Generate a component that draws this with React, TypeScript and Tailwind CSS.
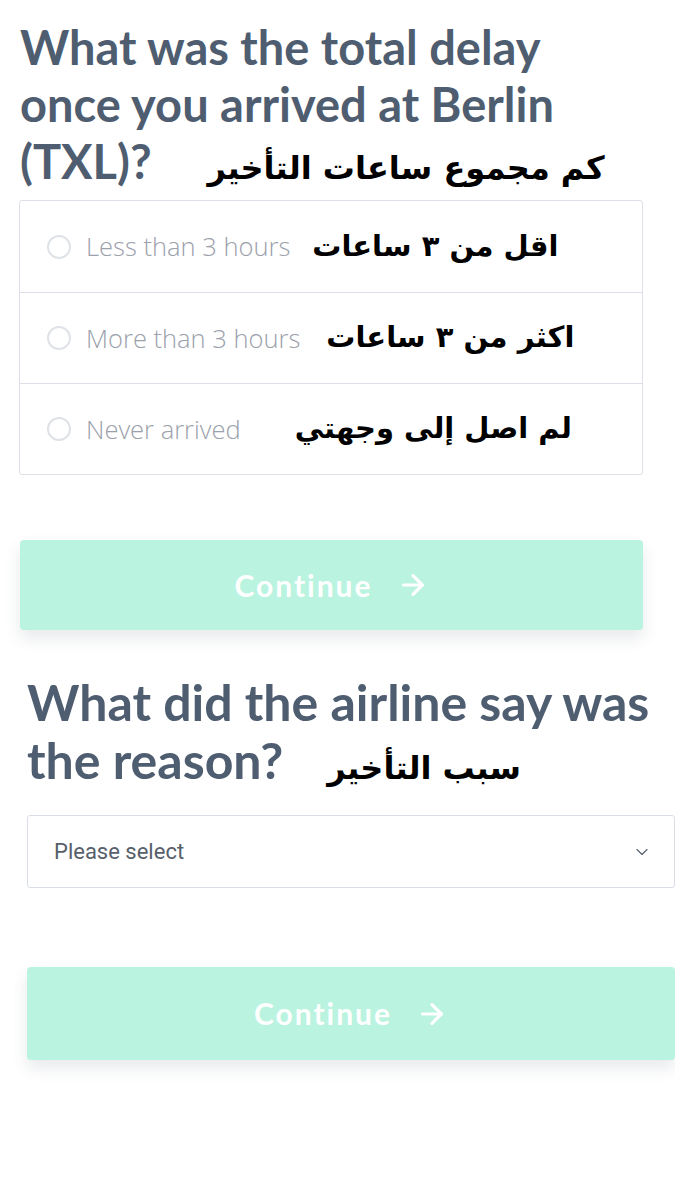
import { ArrowRight, ChevronDown } from "lucide-react";

const options = [
  { label: "Less than 3 hours", ar: "اقل من ٣ ساعات", gap: "ml-[22px]" },
  { label: "More than 3 hours", ar: "اكثر من ٣ ساعات", gap: "ml-[26px]" },
  { label: "Never arrived", ar: "لم اصل إلى وجهتي", gap: "ml-[54px]" },
];

const ar = { fontFamily: '"DejaVu Sans", "Noto Sans", sans-serif' };

function ContinueButton({ className }: { className: string }) {
  return (
    <button
      className={`flex items-center justify-center gap-[24px] rounded-[4px] bg-[#baf3df] text-white shadow-[0_8px_16px_rgba(60,70,90,0.12)] ${className}`}
    >
      <span className="text-[30px] font-bold tracking-[2px]" style={{ fontFamily: "Lato, sans-serif" }}>
        Continue
      </span>
      <ArrowRight className="h-[32px] w-[32px]" strokeWidth={2.4} />
    </button>
  );
}

export default function App() {
  return (
    <div className="min-h-[1200px] bg-white" style={{ fontFamily: "Lato, sans-serif" }}>
      <div className="pl-[20px] pr-[32px] pt-[19px]">
        <h1 className="text-[47px] font-bold leading-[57px] text-[#4f5d70]">
          What was the total delay
          <br />
          once you arrived at Berlin
          <br />
          (TXL)?
          <span className="ml-[56px] text-[32px] font-bold leading-none text-black" style={ar} dir="rtl">
            كم مجموع ساعات التأخير
          </span>
        </h1>

        <div className="mt-[10px] ml-[-1px] rounded-[3px] border border-[#dde0e6]">
          {options.map((o, i) => (
            <div
              key={o.label}
              className={`flex h-[91px] items-center pl-[27px] ${i > 0 ? "border-t border-[#dde0e6]" : ""}`}
            >
              <span className="h-[24px] w-[24px] rounded-full border-2 border-[#dfe2e7]" />
              <span className="ml-[15px] text-[25.5px] font-light text-[#9ba1ab]" style={{ fontFamily: '"Open Sans", sans-serif' }}>
                {o.label}
              </span>
              <span className={`${o.gap} text-[29px] font-bold text-black`} style={ar} dir="rtl">
                {o.ar}
              </span>
            </div>
          ))}
        </div>

        <ContinueButton className="mt-[65px] h-[90px] w-[623px]" />
      </div>

      <div className="pl-[27px] pt-[43px]">
        <h2 className="text-[50px] font-bold leading-[58px] text-[#4f5d70]">
          What did the airline say was
          <br />
          the reason?
          <span className="ml-[44px] text-[32px] font-bold leading-none text-black" style={ar} dir="rtl">
            سبب التأخير
          </span>
        </h2>

        <div className="mt-[26px] flex h-[73px] items-center justify-between rounded-[3px] border border-[#d9dde4] pl-[26px] pr-[22px]">
          <span className="text-[22px] text-[#575f6b]" style={{ fontFamily: "Roboto, sans-serif" }}>
            Please select
          </span>
          <ChevronDown className="h-[20px] w-[20px] text-[#5a6270]" strokeWidth={1.4} />
        </div>

        <ContinueButton className="mt-[79px] h-[93px] w-full" />
      </div>
    </div>
  );
}
